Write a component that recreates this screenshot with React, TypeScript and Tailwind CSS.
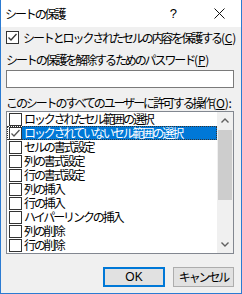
const items = [
  "ロックされたセル範囲の選択",
  "ロックされていないセル範囲の選択",
  "セルの書式設定",
  "列の書式設定",
  "行の書式設定",
  "列の挿入",
  "行の挿入",
  "ハイパーリンクの挿入",
  "列の削除",
  "行の削除",
];

const Check = ({ color = "#333" }: { color?: string }) => (
  <svg width="11" height="11" viewBox="0 0 11 11" className="block">
    <path d="M1.5 5.5 L4 8 L9.5 2" fill="none" stroke={color} strokeWidth="1.3" />
  </svg>
);

const Box = ({ checked, color }: { checked?: boolean; color?: string }) => (
  <div className="w-[13px] h-[13px] shrink-0 border border-[#333333] bg-white flex items-center justify-center">
    {checked && <Check color={color} />}
  </div>
);

const Chevron = ({ up }: { up?: boolean }) => (
  <svg width="8" height="5" viewBox="0 0 8 5" className="block">
    <path
      d={up ? "M0.5 4.5 L4 1 L7.5 4.5" : "M0.5 0.5 L4 4 L7.5 0.5"}
      fill="none"
      stroke="#606060"
      strokeWidth="1.4"
    />
  </svg>
);

const Key = ({ k, tail = "" }: { k: string; tail?: string }) => (
  <span className="tracking-[-0.3px]">
    (<u>{k}</u>){tail}
  </span>
);

export default function App() {
  return (
    <div className="w-[242px] h-[294px] flex flex-col border-x border-b border-[#2b7bd2] bg-[#f0f0f0] overflow-hidden text-black text-[12px] tracking-[-2.1px] font-['Noto_Sans_CJK_JP','Noto_Sans',sans-serif]">
      {/* title bar */}
      <div className="h-[27px] shrink-0 bg-white flex items-center pl-[4px] pr-[16px]">
        <span className="leading-[14px]">シートの保護</span>
        <span className="ml-auto mr-[37px] text-[13px] tracking-normal font-['Liberation_Sans',sans-serif]">?</span>
        <svg width="11" height="11" viewBox="0 0 11 11" className="block">
          <path d="M0.5 0.5 L10.5 10.5 M10.5 0.5 L0.5 10.5" stroke="#111" strokeWidth="1" />
        </svg>
      </div>

      <div className="flex-1 flex flex-col pl-[5px] pr-[7px]">
        <div className="mt-[4px] h-[13px] flex items-center gap-[4px]">
          <Box checked />
          <span className="leading-[14px] whitespace-nowrap">
            シートとロックされたセルの内容を保護する<Key k="C" />
          </span>
        </div>

        <div className="mt-[9px] h-[14px] leading-[14px] whitespace-nowrap">
          シートの保護を解除するためのパスワード<Key k="P" />
        </div>
        <div className="mt-[3px] h-[18px] border border-[#7a7a7a] bg-white" />

        <div className="mt-[8px] h-[14px] leading-[14px] whitespace-nowrap">
          このシートのすべてのユーザーに許可する操作<Key k="O" tail=":" />
        </div>

        <div className="mt-[1px] h-[143px] border border-[#828790] bg-white flex">
          <div className="flex-1 flex flex-col">
            {items.map((t, i) => {
              const sel = i === 1;
              return (
                <div
                  key={t}
                  className={
                    "h-[14px] shrink-0 flex items-center pl-[2px] " +
                    (sel ? "outline outline-1 outline-dotted outline-[#333] -outline-offset-1" : "")
                  }
                >
                  <Box checked={sel} color="#555" />
                  <span
                    className={
                      "flex-1 h-[14px] leading-[14px] pl-[2px] whitespace-nowrap " +
                      (sel ? "bg-[#0078d7] text-white" : "")
                    }
                  >
                    {t}
                  </span>
                </div>
              );
            })}
          </div>
          <div className="w-[16px] bg-[#f0f0f0] flex flex-col">
            <div className="h-[17px] flex items-center justify-center">
              <Chevron up />
            </div>
            <div className="flex-1 px-[1px]">
              <div className="mt-[1px] h-[70px] bg-[#cdcdcd]" />
            </div>
            <div className="h-[17px] flex items-center justify-center">
              <Chevron />
            </div>
          </div>
        </div>

        <div className="mt-[13px] flex justify-end gap-[8px]">
          <div className="w-[62px] h-[20px] border-2 border-[#0078d7] bg-[#e1e1e1] flex items-center justify-center tracking-normal font-['Liberation_Sans',sans-serif] text-[12px]">
            OK
          </div>
          <div className="w-[61px] h-[20px] border border-[#adadad] bg-[#e1e1e1] flex items-center justify-center">
            キャンセル
          </div>
        </div>
      </div>
    </div>
  );
}
